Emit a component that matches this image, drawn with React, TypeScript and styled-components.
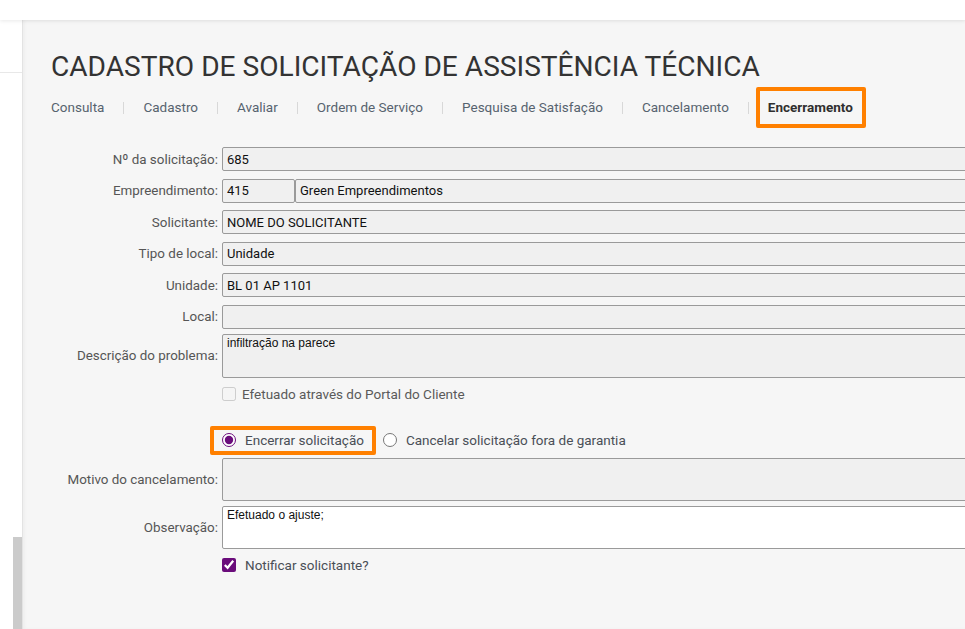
import React from "react";
import styled, { createGlobalStyle } from "styled-components";

const GlobalStyle = createGlobalStyle`
  html, body {
    margin: 0;
    padding: 0;
    background: #ffffff;
    font-family: Roboto, "Liberation Sans", Arial, sans-serif;
  }
  * {
    box-sizing: border-box;
  }
`;

const Page = styled.div`
  display: grid;
  grid-template-columns: 22px 1fr;
  grid-template-rows: 20px 1fr;
  height: 100vh;
  overflow: hidden;
  background: #ffffff;
`;

const TopBar = styled.header`
  grid-column: 1 / -1;
  background: #ffffff;
  box-shadow: 0 1px 4px rgba(0, 0, 0, 0.09);
  position: relative;
  z-index: 2;
`;

const Sidebar = styled.aside`
  display: flex;
  flex-direction: column;
  background: #ffffff;
`;

const SideHead = styled.div`
  flex: none;
  height: 53px;
  border-bottom: 1px solid #e8e8e8;
`;

const SideTrack = styled.div`
  flex: 1;
  display: flex;
  flex-direction: column;
  justify-content: flex-end;
  align-items: flex-end;
`;

const Thumb = styled.div`
  width: 9px;
  height: 92px;
  background: #cbcbcb;
`;

const Main = styled.main`
  background: #f6f6f6;
  border-left: 1px solid #e3e3e3;
  box-shadow: inset 2px 0 3px rgba(0, 0, 0, 0.03);
  padding: 30px 0 0 28px;
  overflow: hidden;
`;

const Title = styled.h1`
  margin: 0;
  font-family: Roboto, "Liberation Sans", sans-serif;
  font-weight: 400;
  font-size: 28.1px;
  line-height: 33px;
  color: #333333;
  white-space: nowrap;
`;

const Tabs = styled.nav`
  display: flex;
  align-items: center;
  height: 41px;
  margin-top: 4px;
`;

const Tab = styled.span<{ $active?: boolean }>`
  font-size: 13.5px;
  line-height: 17px;
  white-space: nowrap;
  color: ${(p) => (p.$active ? "#2f2f2f" : "#56636f")};
  font-weight: ${(p) => (p.$active ? 700 : 400)};
  ${(p) =>
    p.$active &&
    `
    display: flex;
    align-items: center;
    height: 41px;
    padding: 0 9px 0 8px;
    margin-left: -12px;
    border: 4px solid #ff8000;
    border-radius: 2px;
  `}
`;

const Separator = styled.span`
  width: 1px;
  height: 12px;
  margin: 0 19px;
  background: #d8d8d8;
`;

const Form = styled.form`
  display: flex;
  flex-direction: column;
  margin-top: 19px;
`;

const FieldRow = styled.div<{ $gap: number }>`
  display: flex;
  align-items: center;
  margin-top: ${(p) => p.$gap}px;
`;

const Label = styled.label`
  flex: none;
  width: 171px;
  padding-right: 4px;
  text-align: right;
  font-size: 13.4px;
  color: #555555;
  white-space: nowrap;
`;

const Control = styled.div`
  flex: none;
  display: flex;
  width: 760px;
`;

const Input = styled.input<{ $w?: number }>`
  height: 24px;
  ${(p) => (p.$w ? `width: ${p.$w}px; flex: none;` : "flex: 1; min-width: 0;")}
  margin: 0;
  padding: 0 4px;
  border: 1px solid #9a9a9a;
  border-radius: 2px;
  background: #f0f0f0;
  font-family: Roboto, "Liberation Sans", sans-serif;
  font-size: 13px;
  color: #111111;
  outline: none;
`;

const TextArea = styled.textarea<{ $h: number; $bg?: string }>`
  flex: 1;
  height: ${(p) => p.$h}px;
  margin: 0;
  padding: 1px 4px;
  border: 1px solid #9a9a9a;
  border-radius: 2px;
  background: ${(p) => p.$bg ?? "#f0f0f0"};
  font-family: "Liberation Sans", Arial, sans-serif;
  font-size: 12px;
  line-height: 14px;
  color: #111111;
  resize: none;
  outline: none;
`;

const CheckLine = styled.label<{ $muted?: boolean }>`
  display: flex;
  align-items: center;
  gap: ${(p) => (p.$muted ? 6 : 9)}px;
  font-size: 13.5px;
  color: ${(p) => (p.$muted ? "#5a5a5a" : "#4a4f57")};
  white-space: nowrap;
`;

const Box = styled.input`
  width: 14px;
  height: 14px;
  margin: 0;
  accent-color: #6a0c7b;
`;

const RadioGroup = styled.div`
  display: flex;
  align-items: center;
  margin-left: -12px;
  gap: 7px;
`;

const RadioOption = styled.label<{ $highlight?: boolean }>`
  display: flex;
  align-items: center;
  gap: 9px;
  font-size: 13.5px;
  color: #4a4f57;
  white-space: nowrap;
  ${(p) =>
    p.$highlight &&
    `
    height: 29px;
    padding: 0 8px;
    border: 4px solid #ff8000;
    border-radius: 2px;
  `}
`;

const Radio = styled.input`
  width: 14px;
  height: 14px;
  margin: 0;
  accent-color: #6a0c7b;
`;

const tabs = [
  "Consulta",
  "Cadastro",
  "Avaliar",
  "Ordem de Serviço",
  "Pesquisa de Satisfação",
  "Cancelamento",
  "Encerramento",
];

export default function App() {
  return (
    <>
      <GlobalStyle />
      <Page>
        <TopBar />
        <Sidebar>
          <SideHead />
          <SideTrack>
            <Thumb />
          </SideTrack>
        </Sidebar>
        <Main>
          <Title>CADASTRO DE SOLICITAÇÃO DE ASSISTÊNCIA TÉCNICA</Title>
          <Tabs>
            {tabs.map((t, i) => (
              <React.Fragment key={t}>
                {i > 0 && <Separator />}
                <Tab $active={t === "Encerramento"}>{t}</Tab>
              </React.Fragment>
            ))}
          </Tabs>
          <Form onSubmit={(e) => e.preventDefault()}>
            <FieldRow $gap={0}>
              <Label>Nº da solicitação:</Label>
              <Control>
                <Input readOnly value="685" />
              </Control>
            </FieldRow>
            <FieldRow $gap={7.5}>
              <Label>Empreendimento:</Label>
              <Control>
                <Input readOnly value="415" $w={73} />
                <Input readOnly value="Green Empreendimentos" />
              </Control>
            </FieldRow>
            <FieldRow $gap={7.5}>
              <Label>Solicitante:</Label>
              <Control>
                <Input readOnly value="NOME DO SOLICITANTE" />
              </Control>
            </FieldRow>
            <FieldRow $gap={7.5}>
              <Label>Tipo de local:</Label>
              <Control>
                <Input readOnly value="Unidade" />
              </Control>
            </FieldRow>
            <FieldRow $gap={7.5}>
              <Label>Unidade:</Label>
              <Control>
                <Input readOnly value="BL 01 AP 1101" />
              </Control>
            </FieldRow>
            <FieldRow $gap={7.5}>
              <Label>Local:</Label>
              <Control>
                <Input readOnly value="" />
              </Control>
            </FieldRow>
            <FieldRow $gap={5}>
              <Label>Descrição do problema:</Label>
              <Control>
                <TextArea readOnly $h={44} value="infiltração na parece" />
              </Control>
            </FieldRow>
            <FieldRow $gap={8}>
              <Label />
              <Control>
                <CheckLine $muted>
                  <Box type="checkbox" disabled />
                  Efetuado através do Portal do Cliente
                </CheckLine>
              </Control>
            </FieldRow>
            <FieldRow $gap={24}>
              <Label />
              <Control>
                <RadioGroup>
                  <RadioOption $highlight>
                    <Radio type="radio" name="acao" defaultChecked />
                    Encerrar solicitação
                  </RadioOption>
                  <RadioOption>
                    <Radio type="radio" name="acao" />
                    Cancelar solicitação fora de garantia
                  </RadioOption>
                </RadioGroup>
              </Control>
            </FieldRow>
            <FieldRow $gap={3}>
              <Label>Motivo do cancelamento:</Label>
              <Control>
                <TextArea readOnly $h={43} value="" />
              </Control>
            </FieldRow>
            <FieldRow $gap={5}>
              <Label>Observação:</Label>
              <Control>
                <TextArea readOnly $h={43} $bg="#ffffff" value="Efetuado o ajuste;" />
              </Control>
            </FieldRow>
            <FieldRow $gap={8.5}>
              <Label />
              <Control>
                <CheckLine>
                  <Box type="checkbox" defaultChecked />
                  Notificar solicitante?
                </CheckLine>
              </Control>
            </FieldRow>
          </Form>
        </Main>
      </Page>
    </>
  );
}
